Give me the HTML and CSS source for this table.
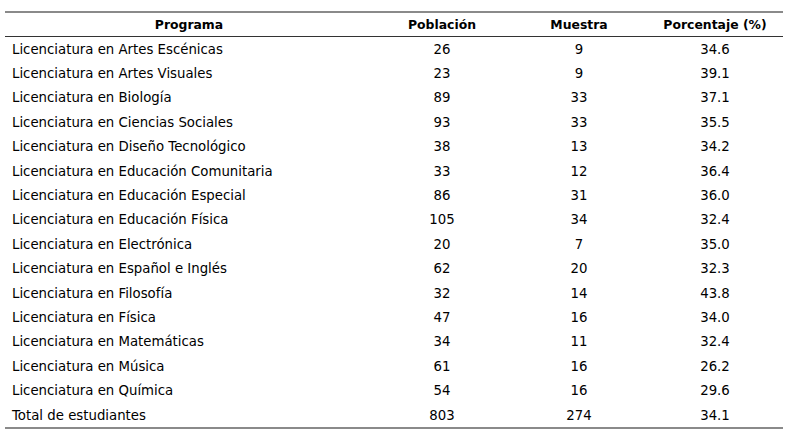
FILE: index.html
```html
<!DOCTYPE html>
<html lang="es">
<head>
<meta charset="utf-8">
<link rel="stylesheet" href="styles.css">
</head>
<body>
<table class="data">
  <colgroup>
    <col class="c-prog"><col class="c-num"><col class="c-num2"><col class="c-num2">
  </colgroup>
  <thead>
    <tr><th>Programa</th><th>Población</th><th>Muestra</th><th>Porcentaje (%)</th></tr>
  </thead>
  <tbody>
    <tr><td>Licenciatura en Artes Escénicas</td><td>26</td><td>9</td><td>34.6</td></tr>
    <tr><td>Licenciatura en Artes Visuales</td><td>23</td><td>9</td><td>39.1</td></tr>
    <tr><td>Licenciatura en Biología</td><td>89</td><td>33</td><td>37.1</td></tr>
    <tr><td>Licenciatura en Ciencias Sociales</td><td>93</td><td>33</td><td>35.5</td></tr>
    <tr><td>Licenciatura en Diseño Tecnológico</td><td>38</td><td>13</td><td>34.2</td></tr>
    <tr><td>Licenciatura en Educación Comunitaria</td><td>33</td><td>12</td><td>36.4</td></tr>
    <tr><td>Licenciatura en Educación Especial</td><td>86</td><td>31</td><td>36.0</td></tr>
    <tr><td>Licenciatura en Educación Física</td><td>105</td><td>34</td><td>32.4</td></tr>
    <tr><td>Licenciatura en Electrónica</td><td>20</td><td>7</td><td>35.0</td></tr>
    <tr><td>Licenciatura en Español e Inglés</td><td>62</td><td>20</td><td>32.3</td></tr>
    <tr><td>Licenciatura en Filosofía</td><td>32</td><td>14</td><td>43.8</td></tr>
    <tr><td>Licenciatura en Física</td><td>47</td><td>16</td><td>34.0</td></tr>
    <tr><td>Licenciatura en Matemáticas</td><td>34</td><td>11</td><td>32.4</td></tr>
    <tr><td>Licenciatura en Música</td><td>61</td><td>16</td><td>26.2</td></tr>
    <tr><td>Licenciatura en Química</td><td>54</td><td>16</td><td>29.6</td></tr>
    <tr><td>Total de estudiantes</td><td>803</td><td>274</td><td>34.1</td></tr>
  </tbody>
</table>
</body>
</html>
```
FILE: styles.css
```css
html, body {
  margin: 0;
  padding: 0;
  background: #fff;
}
body {
  font-family: "DejaVu Sans", Verdana, sans-serif;
  font-size: 13.3px;
  color: #000;
}
.data {
  margin: 11px 0 0 5px;
  border-collapse: collapse;
  table-layout: fixed;
  width: 778px;
  border-top: 2px solid #8a8a8a;
  border-bottom: 2px solid #8a8a8a;
}
.c-prog { width: 368px; }
.c-num { width: 138px; }
.c-num2 { width: 136px; }
.data th {
  font-size: 12.4px;
  font-weight: bold;
  text-align: center;
  height: 23px;
  padding: 0;
  border-bottom: 1px solid #333;
  vertical-align: middle;
}
.data td {
  height: 24.4px;
  padding: 0;
  text-align: center;
  vertical-align: middle;
  white-space: nowrap;
}
.data td:first-child {
  text-align: left;
  padding-left: 7px;
}
```
